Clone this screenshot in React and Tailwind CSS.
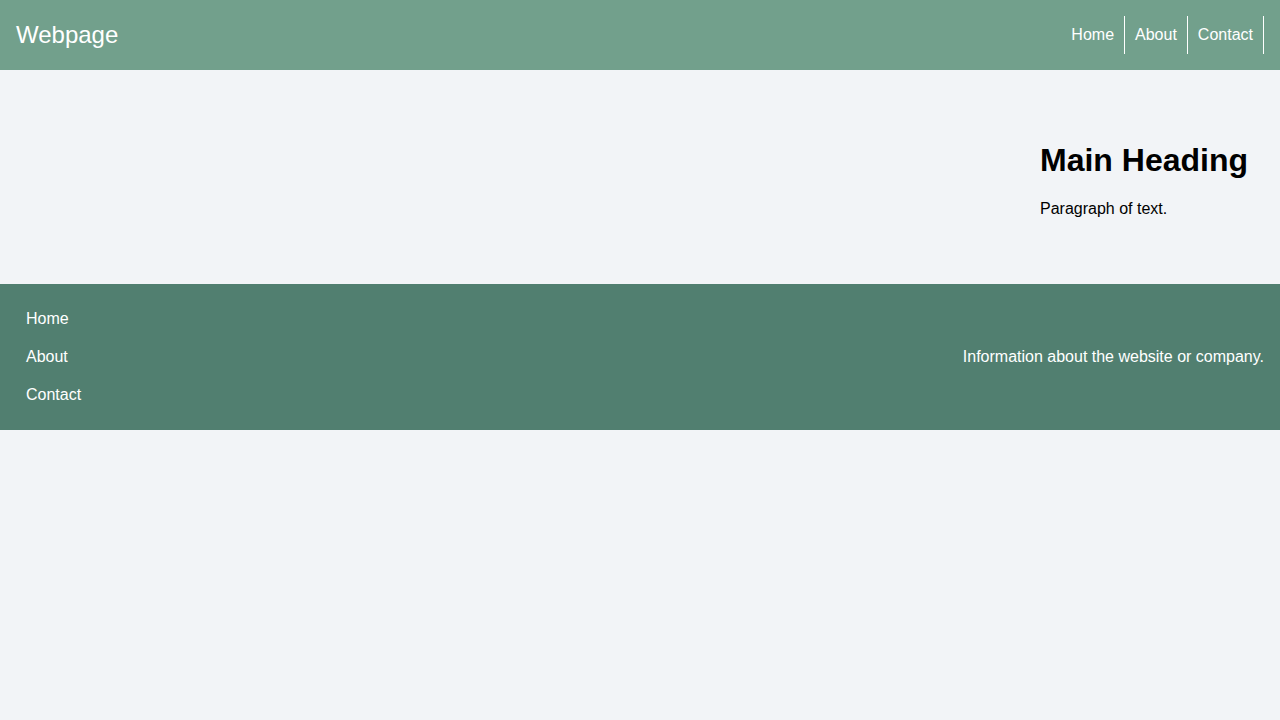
import React from 'react';

const links = ['Home', 'About', 'Contact'];

function App() {
  return (
    <div className="min-h-screen bg-[#f2f4f7] text-black font-['Liberation_Sans',Arial,sans-serif]">
      {/* Header */}
      <header className="flex items-center justify-between px-4 py-4 bg-[#72a08c] text-white">
        <div className="text-[24px] leading-[28px]">Webpage</div>
        <nav className="flex">
          {links.map((link) => (
            <a key={link} href="#" className="px-[10px] py-[10px] text-[16px] leading-[18px] border-r border-white">
              {link}
            </a>
          ))}
        </nav>
      </header>

      {/* Main */}
      <section className="flex justify-end px-4 py-12">
        <div className="pl-6 pr-4 pt-6 pb-[18px]">
          <h1 className="text-[32px] leading-[37px] font-bold">Main Heading</h1>
          <p className="mt-[21px] text-[16px] leading-[18px]">Paragraph of text.</p>
        </div>
      </section>

      {/* Footer */}
      <footer className="flex items-center justify-between p-4 bg-[#517f70] text-white">
        <ul className="flex flex-col">
          {links.map((link) => (
            <li key={link}>
              <a href="#" className="block px-[10px] py-[10px] text-[16px] leading-[18px]">{link}</a>
            </li>
          ))}
        </ul>
        <p className="text-[16px] leading-[18px]">Information about the website or company.</p>
      </footer>
    </div>
  );
}

export default App;
